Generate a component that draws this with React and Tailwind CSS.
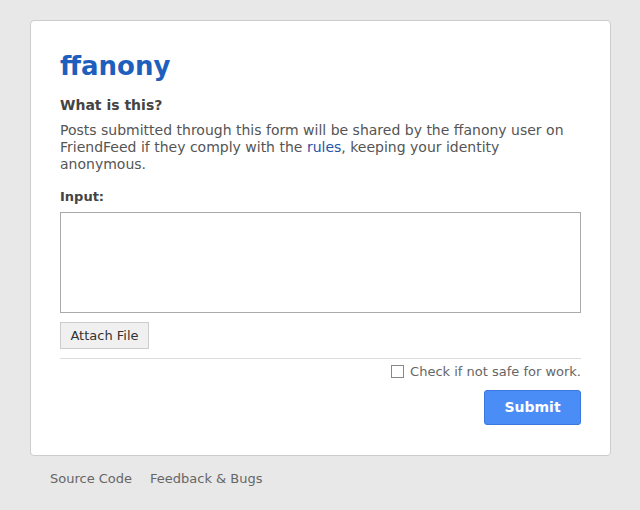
export default function App() {
  const font = { fontFamily: '"DejaVu Sans", Verdana, sans-serif' };
  return (
    <div className="min-h-[510px] bg-[#e8e8e8] pt-[20px] pl-[30px]" style={font}>
      <div className="w-[581px] bg-white border border-[#cccccc] rounded-[4px] px-[29px] pt-[30px] pb-[30px]">
        <h1 className="text-[26px] leading-[30px] font-bold text-[#1e5fbd] m-0">ffanony</h1>
        <h2 className="mt-[16px] text-[14px] leading-[16px] font-bold text-[#444444]">What is this?</h2>
        <p className="mt-[9px] text-[14px] leading-[17px] text-[#555555]">
          Posts submitted through this form will be shared by the ffanony user on FriendFeed if they comply with the{" "}
          <a className="text-[#1f55a8]">rules</a>, keeping your identity anonymous.
        </p>
        <div className="mt-[16px] text-[13px] leading-[15px] font-bold text-[#444444]">Input:</div>
        <textarea className="mt-[8px] block w-[521px] h-[101px] border border-[#aaaaaa] bg-white resize-none outline-none"></textarea>
        <button className="mt-[9px] block w-[89px] h-[27px] bg-[#f0f0f0] border border-[#cccccc] text-[13px] text-[#333333]">
          Attach File
        </button>
        <div className="mt-[9px] border-t border-[#dddddd]"></div>
        <div className="mt-[5px] flex justify-end items-center gap-[6px] text-[13px] leading-[15px] text-[#666666]">
          <span className="w-[13px] h-[13px] border border-[#888888] bg-white"></span>
          <span>Check if not safe for work.</span>
        </div>
        <div className="mt-[11px] flex justify-end">
          <button className="w-[97px] h-[35px] rounded-[3px] bg-[#4a8df7] border border-[#3a78e0] text-white font-bold text-[14px]">
            Submit
          </button>
        </div>
      </div>
      <div className="mt-[13px] pl-[20px] flex gap-[18px] text-[13px] text-[#666666]">
        <span>Source Code</span>
        <span>Feedback &amp; Bugs</span>
      </div>
    </div>
  );
}
